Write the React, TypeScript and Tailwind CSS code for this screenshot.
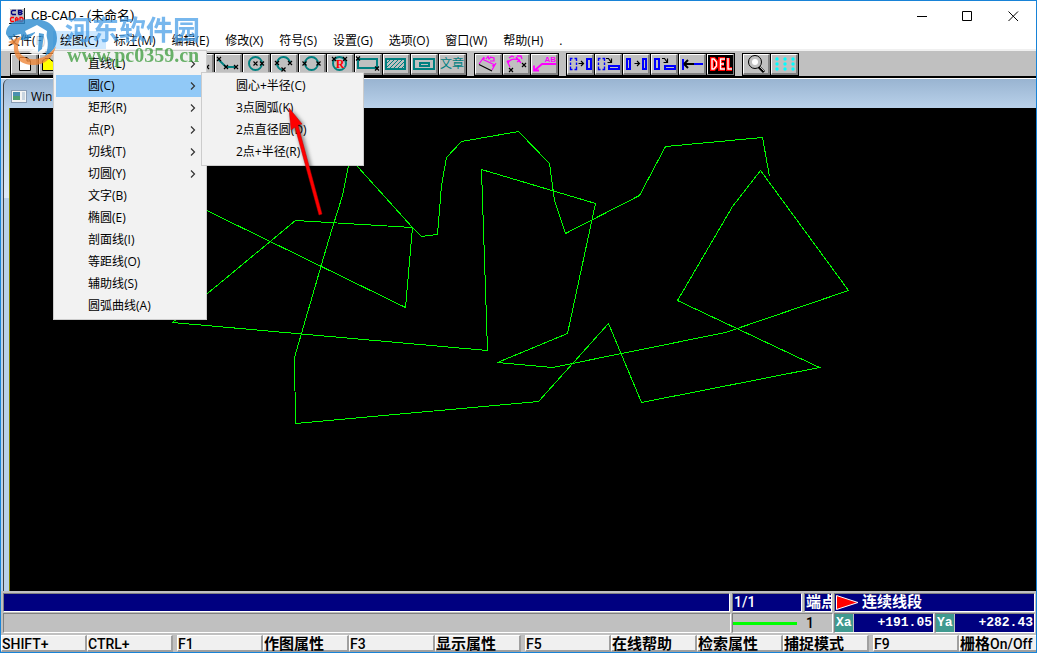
import { ReactNode, useState } from "react";
import { cx } from "class-variance-authority";

interface SubItem {
  label: string;
}

interface MenuItem {
  label: string;
  arrow?: boolean;
  children?: SubItem[];
}

const menus = [
  "文件(F)",
  "绘图(C)",
  "标注(M)",
  "编辑(E)",
  "修改(X)",
  "符号(S)",
  "设置(G)",
  "选项(O)",
  "窗口(W)",
  "帮助(H)",
  ".",
];

const drawMenu: MenuItem[] = [
  { label: "直线(L)", arrow: true },
  {
    label: "圆(C)",
    arrow: true,
    children: [
      { label: "圆心+半径(C)" },
      { label: "3点圆弧(K)" },
      { label: "2点直径圆(D)" },
      { label: "2点+半径(R)" },
    ],
  },
  { label: "矩形(R)", arrow: true },
  { label: "点(P)", arrow: true },
  { label: "切线(T)", arrow: true },
  { label: "切圆(Y)", arrow: true },
  { label: "文字(B)" },
  { label: "椭圆(E)" },
  { label: "剖面线(I)" },
  { label: "等距线(O)" },
  { label: "辅助线(S)" },
  { label: "圆弧曲线(A)" },
];

// small black cross used to mark picked points
const Cross = ({ x, y }: { x: number; y: number }) => (
  <path
    d={`M${x - 2} ${y - 2}L${x + 2} ${y + 2}M${x + 2} ${y - 2}L${x - 2} ${y + 2}`}
    stroke="#000"
    strokeWidth="1.2"
  />
);

// covers the button including its bevel
const Icon = ({ children }: { children?: ReactNode }) => (
  <svg viewBox="0 0 27 21" className="absolute -top-px -left-px h-[21px] w-[27px]" fill="none">
    {children}
  </svg>
);

const DashedBox = () => (
  <path
    d="M5.5 4.5H3.5V7M3.5 8.500V11M3.5 12.500V15.500H5.500M7.500 4.500H9.500V7M9.500 8.500V11M9.500 12.500V15.500H7.500"
    stroke="#0000ff"
    strokeWidth="1.4"
  />
);

const RightArrow = () => (
  <path d="M11.500 9.500H16M14 7L16.500 9.500L14 12" stroke="#000" strokeWidth="1.2" />
);

const DownArrow = () => (
  <path d="M11 4.500H13.500L16 8M16.500 4.500V8.500H12.500" stroke="#000" strokeWidth="1.2" />
);

const icons: Record<string, ReactNode> = {
  new: (
    <Icon>
      <path d="M8.500 3.500H16L19.500 7V16.500H8.500Z" fill="#fff" stroke="#000" />
      <path d="M16 3.500V7H19.500" stroke="#000" />
    </Icon>
  ),
  open: (
    <Icon>
      <path d="M3.500 16V7L6 4.500H11L13 7H20V16.500H3.500Z" fill="#ffff00" stroke="#000" />
    </Icon>
  ),
  save: (
    <Icon>
      <path d="M6.500 4.500H19.500V16.500H6.500Z" fill="#008080" stroke="#000" />
    </Icon>
  ),
  blank: (
    <Icon>
      <path d="M4 5L20 13" stroke="#008080" strokeWidth="2" />
      <Cross x={4} y={5} />
      <Cross x={20} y={13} />
    </Icon>
  ),
  line: (
    <Icon>
      <path d="M3 5L11 13H21" stroke="#008080" strokeWidth="2" />
      <Cross x={4} y={5} />
      <Cross x={11} y={13} />
      <Cross x={21} y={13} />
    </Icon>
  ),
  circleCenter: (
    <Icon>
      <circle cx="12.500" cy="9.500" r="6.500" stroke="#008080" strokeWidth="2" />
      <Cross x={12.5} y={9.5} />
      <Cross x={19} y={9.5} />
    </Icon>
  ),
  arc: (
    <Icon>
      <path d="M12 16A6.500 6.500 0 1 1 19 9.500" stroke="#008080" strokeWidth="2" />
      <Cross x={6} y={9} />
      <Cross x={19} y={9} />
      <Cross x={12.5} y={15.5} />
    </Icon>
  ),
  circle: (
    <Icon>
      <circle cx="12.500" cy="9.500" r="6.500" stroke="#008080" strokeWidth="2" />
      <Cross x={5.5} y={9.5} />
      <Cross x={19.5} y={9.5} />
    </Icon>
  ),
  radius: (
    <>
      <Icon>
        <circle cx="12.500" cy="9.500" r="6.500" stroke="#008080" strokeWidth="2" />
        <Cross x={7} y={5} />
        <Cross x={18} y={5} />
      </Icon>
      <span className="relative font-[Liberation_Serif,serif] text-[12px] leading-[18px] font-bold text-[#ff0000]">
        R
      </span>
    </>
  ),
  rect: (
    <Icon>
      <path d="M3 5H22V14H3Z" stroke="#008080" strokeWidth="2" />
      <Cross x={3} y={4.5} />
      <Cross x={22} y={14.5} />
    </Icon>
  ),
  hatch: (
    <Icon>
      <path d="M3 5H22V15H3Z" stroke="#008080" strokeWidth="2" />
      <path
        d="M4 9L8 5M4 13L12 5M6 15L16 5M10 15L20 5M14 15L22 7M18 15L22 11"
        stroke="#008080"
      />
    </Icon>
  ),
  doubleRect: (
    <Icon>
      <path d="M3 5H23V15H3ZM9 9H18V12H9Z" stroke="#008080" strokeWidth="2" />
    </Icon>
  ),
  text: <span className="relative text-[12px] leading-[18px] text-[#008080]">文章</span>,
  dimLine: (
    <Icon>
      <path d="M4 10.500L17 17" stroke="#000" strokeWidth="1.2" />
      <path
        d="M4 10L9 3M17 16L21 9M7 5L20 11M7 5L10 4M20 11L17 12M11 5L13 2.500L14 5L16 3M15 7L19 7L19 4L15 3"
        stroke="#ff00ff"
        strokeWidth="1.2"
      />
    </Icon>
  ),
  dimArc: (
    <Icon>
      <path
        d="M7 13L4 7M18 9L13 3M5 9C7 5 10 4 17 6M5 9L5 6M17 6L14 8M6 4L9 2L11 3M14 2H18L19 5"
        stroke="#ff00ff"
        strokeWidth="1.3"
      />
      <Cross x={8} y={16} />
      <Cross x={21} y={11} />
    </Icon>
  ),
  leader: (
    <>
      <Icon>
        <path d="M25 10H11L4 16M3 11.500V16.500H8" stroke="#ff00ff" strokeWidth="1.800" />
      </Icon>
      <span className="absolute top-0 right-0 font-[Liberation_Sans,sans-serif] text-[8px] leading-[9px] font-bold text-[#ff00ff]">
        AB
      </span>
    </>
  ),
  move: (
    <Icon>
      <DashedBox />
      <RightArrow />
      <path d="M20 5H24V15H20Z" stroke="#0000ff" strokeWidth="2" />
    </Icon>
  ),
  rotate: (
    <Icon>
      <DashedBox />
      <DownArrow />
      <path d="M14 12H24V15H14Z" stroke="#0000ff" strokeWidth="2" />
    </Icon>
  ),
  copy: (
    <Icon>
      <path d="M4 5H7V15H4ZM20 5H23V15H20Z" stroke="#0000ff" strokeWidth="2" />
      <RightArrow />
    </Icon>
  ),
  copyRotate: (
    <Icon>
      <path d="M4 5H8V15H4ZM14 12H24V15H14Z" stroke="#0000ff" strokeWidth="2" />
      <DownArrow />
    </Icon>
  ),
  extend: (
    <Icon>
      <path d="M4 5V16M4 10H24" stroke="#0000ff" strokeWidth="2" />
      <path d="M5 10H15M5 10L9 6M5 10L9 14" stroke="#000" strokeWidth="2" />
    </Icon>
  ),
  delete: (
    <Icon>
      <rect x="1" y="1" width="25" height="19" fill="#000" />
      <g stroke="#ff0000" strokeWidth="4">
        <path d="M5 5V15H7L10 12V8L7 5ZM18 5H13V15H18M13 10H17M21 4V15H25" />
      </g>
      <g stroke="#fff" strokeWidth="1.400">
        <path d="M5 5V15H7L9.500 12V8L7 5ZM18 5H13.500V15H18M13.500 10H17M21 4V15H25" />
      </g>
    </Icon>
  ),
  zoom: (
    <Icon>
      <path d="M15 12L21 18" stroke="#000" strokeWidth="3" />
      <path d="M16 12L21 17" stroke="#c0c0c0" />
      <circle cx="12" cy="8" r="6.500" fill="#c0c0c0" stroke="#000" />
      <circle cx="12" cy="8" r="3" fill="#fff" />
    </Icon>
  ),
  grid: (
    <Icon>
      <g fill="#00ffff">
        {[5, 10, 15].map((y) =>
          [6, 14, 22].map((x) => <circle key={`${x}-${y}`} cx={x} cy={y} r="1.700" />)
        )}
      </g>
    </Icon>
  ),
};

const toolGroups = [
  ["new", "open", "save"],
  [
    "blank",
    "blank",
    "blank",
    "blank",
    "line",
    "circleCenter",
    "arc",
    "circle",
    "radius",
    "rect",
    "hatch",
    "doubleRect",
    "text",
  ],
  ["dimLine", "dimArc", "leader"],
  ["move", "rotate", "copy", "copyRotate", "extend", "delete"],
  ["zoom", "grid"],
];

const keyGroups = [
  [["SHIFT+"], ["CTRL+"]],
  [["F1"], ["", "作图属性"], ["F3"], ["", "显示属性"]],
  [["F5"], ["", "在线帮助"], ["", "检索属性"], ["", "捕捉模式"]],
  [["F9"], ["On/Off", "栅格"]],
];

const AppIcon = () => (
  <svg viewBox="0 0 16 16" className="h-4 w-4" fill="none">
    <rect width="16" height="16" fill="#c0c0c0" />
    <path d="M.5 16V.5H16" stroke="#fff" />
    <path d="M15.500 0V15.500H0" stroke="#202020" />
    <path
      d="M7 2.500H3.500L2.500 3.500V5.500L3.500 6.500H7M9.500 6.500V2.500H12L13 3.500L12 4.500H9.500M12 4.500L13 5.500L12 6.500H9.500"
      stroke="#000080"
      strokeWidth="1.300"
    />
    <path
      d="M5 9.500H2.500L1.500 10.500V12.500L2.500 13.500H5M6.500 14V10.500L7.500 9.500L9 10.500V14M6.500 12H9M11 9.500V13.500H13L14 12.500V10.500L13 9.500Z"
      stroke="#ff0000"
      strokeWidth="1.300"
    />
  </svg>
);

const TitleBar = () => (
  <header className="flex h-[30px] shrink-0 items-center bg-white pl-2">
    <AppIcon />
    <h1 className="flex-1 pl-[6px] font-[Roboto,Noto_Sans_CJK_SC,sans-serif] text-[13px]">
      CB-CAD - (未命名)
    </h1>
    <button aria-label="最小化" className="flex h-7 w-[46px] items-center justify-center">
      <svg viewBox="0 0 11 11" className="h-[11px] w-[11px]" stroke="#000">
        <path d="M1 5.500H11" />
      </svg>
    </button>
    <button aria-label="最大化" className="flex h-7 w-[46px] items-center justify-center">
      <svg viewBox="0 0 11 11" className="h-[11px] w-[11px]" stroke="#000" fill="none">
        <path d="M.5 .5H9.500V9.500H.5Z" />
      </svg>
    </button>
    <button aria-label="关闭" className="flex h-7 w-[46px] items-center justify-center">
      <svg viewBox="0 0 11 11" className="h-[11px] w-[11px]" stroke="#000">
        <path d="M.5 .5L10 10M10 .5L.5 10" />
      </svg>
    </button>
  </header>
);

const DrawMenu = () => {
  const [selected, setSelected] = useState(1);

  return (
    <ul className="absolute top-[19px] left-0 z-20 w-[154px] border border-[#cccccc] bg-[#f2f2f2] p-[2px]">
      {drawMenu.map((item, i) => (
        <li key={item.label} className="relative">
          <button
            onClick={() => setSelected(i)}
            className={cx(
              "flex h-[22px] w-full items-center justify-between pr-2 pl-8 text-left",
              i === selected && "bg-[#91c9f7]"
            )}
          >
            {item.label}
            {item.arrow && (
              <svg viewBox="0 0 6 8" className="h-2 w-[6px]" fill="none" stroke="#333">
                <path d="M1 .5L4.500 4L1 7.500" strokeWidth="1.200" />
              </svg>
            )}
          </button>
          {i === selected && item.children && (
            <ul className="absolute -top-[3px] left-[145px] w-[163px] border border-[#cccccc] bg-[#f2f2f2] p-[2px]">
              {item.children.map((sub) => (
                <li key={sub.label}>
                  <button className="flex h-[22px] w-full items-center pl-8 text-left">
                    {sub.label}
                  </button>
                </li>
              ))}
            </ul>
          )}
        </li>
      ))}
    </ul>
  );
};

const MenuBar = () => (
  <nav className="flex h-5 shrink-0 items-start border-b-2 border-[#f0f0f0] bg-white">
    {menus.map((menu, i) => (
      <div key={menu} className="relative">
        <button
          className={cx(
            "h-[18px] leading-5",
            i === 0 && "w-[52px] px-[7px] text-left",
            i === 1 && "bg-[#cce8ff] px-[7px]",
            i > 1 && "px-2"
          )}
        >
          {menu}
        </button>
        {i === 1 && <DrawMenu />}
      </div>
    ))}
  </nav>
);

const Toolbar = () => (
  <div className="flex h-[28px] shrink-0 gap-[7px] overflow-hidden border-b border-white bg-[#c0c0c0] pt-[2px] pl-[9px] shadow-[inset_0_-2px_0_#000]">
    {toolGroups.map((group, g) => (
      <div key={g} className="flex h-[23px] shrink-0 gap-px bg-black p-px">
        {group.map((name, i) => (
          <button
            key={i}
            aria-label={name}
            className="relative flex h-[21px] w-[27px] items-center justify-center border-t border-r-2 border-b-2 border-l border-t-white border-r-[#808080] border-b-[#808080] border-l-white bg-[#c0c0c0]"
          >
            {icons[name]}
          </button>
        ))}
      </div>
    ))}
  </div>
);

const Drawing = () => (
  <svg
    viewBox="9.5 107.5 1026 483"
    className="block h-[483px] w-[1026px] max-w-none"
    fill="none"
    stroke="#00ff00"
    shapeRendering="crispEdges"
  >
    <polyline points="349,160 342,195 328,240 294,357 295,423 538,401 608,323 641,402 819,367 677,300 732,206 760,170 848,290 725,332 552,367 497,362 567,333 595,203 481,169 487,350 172,322 295,220 412,227 405,307 200,207" />
    <polyline points="349,160 357,166 412,227 421,236 437,234 441,185 446,157 461,141 518,131 549,163 554,200 565,233 639,195 665,146 762,137 769,176" />
  </svg>
);

const Workspace = () => (
  <main className="flex min-h-0 flex-1 flex-col bg-[#b9d1ea] pl-[2px]">
    <div className="flex h-[29px] shrink-0 items-center rounded-tl-md border-l border-[#404040] bg-linear-to-b from-[#99b4d1] to-[#b9d1ea] pt-[6px] pl-[7px]">
      <svg viewBox="0 0 16 13" className="h-[13px] w-4">
        <rect x=".5" y=".5" width="15" height="12" fill="#f4f4f4" stroke="#8a9db5" />
        <rect x="2" y="2" width="7" height="8" fill="#4a90b0" />
        <rect x="2" y="6" width="7" height="4" fill="#4fa070" />
        <rect x="11" y="2" width="3" height="8" fill="#c8d4e0" />
      </svg>
      <span className="pl-1">Win</span>
    </div>
    <div className="flex min-h-0 flex-1 border-l border-[#404040]">
      <div className="flex w-[5px] shrink-0 flex-col">
        <div className="h-[90px] bg-linear-to-b from-[#b9d1ea] to-[#dce9f7]" />
      </div>
      <div className="min-w-0 flex-1 overflow-hidden border-l border-[#808000] bg-black">
        <Drawing />
      </div>
    </div>
  </main>
);

const panel = "border border-t-[#808080] border-r-white border-b-white border-l-[#808080]";

const StatusArea = () => (
  <footer className="shrink-0 bg-[#c0c0c0] pt-[2px] font-[Roboto,Noto_Sans_CJK_SC,sans-serif] text-[15px] text-white">
    <div className="flex h-[19px] gap-[2px] pr-px pl-[2px] leading-[17px] font-bold">
      <div className={cx(panel, "flex-1 bg-[#000080]")} />
      <div className={cx(panel, "w-[70px] bg-[#000080] pl-px text-[14px] font-medium")}>1/1</div>
      <div className={cx(panel, "w-[28px] overflow-hidden bg-[#000080] pl-px whitespace-nowrap")}>
        端点
      </div>
      <div className={cx(panel, "flex w-[201px] items-center gap-[3px] bg-[#000080] pl-px")}>
        <svg viewBox="0 0 23 15" className="h-[15px] w-[23px]">
          <path d="M.5 .5L22 7.500L.5 14.500Z" fill="#ff0000" stroke="#fff" />
        </svg>
        连续线段
      </div>
    </div>
    <div className="mt-px flex h-5 gap-px pr-px pl-[2px]">
      <div className={cx(panel, "flex-1")} />
      <div className={cx(panel, "flex w-[101px] items-center")}>
        <div className="h-[3px] w-16 bg-[#00ff00]" />
        <span className="pl-[9px] text-[14px] font-medium text-black">1</span>
      </div>
      {[
        { axis: "Xa", value: "+191.05" },
        { axis: "Ya", value: "+282.43" },
      ].map(({ axis, value }) => (
        <div
          key={axis}
          className={cx(
            panel,
            "flex w-[100px] items-stretch font-[Liberation_Mono,monospace] text-[13px] leading-[18px] font-bold"
          )}
        >
          <span className="w-[18px] bg-[#409a90] pl-px">{axis}</span>
          <span className="flex-1 border-l border-[#c0c0c0] bg-[#000080] pr-px text-right">
            {value}
          </span>
        </div>
      ))}
    </div>
    <div className="mt-[2px] flex h-[17px] gap-1 overflow-hidden text-black">
      {keyGroups.map((keys, g) => (
        <div key={g} className="flex shrink-0">
          {keys.map(([latin, han]) => (
            <button
              key={latin + han}
              className="h-[17px] w-[86px] border-t border-r-2 border-b-2 border-l border-t-white border-r-[#a0a0a0] border-b-[#a0a0a0] border-l-white bg-[#f0f0f0] text-left leading-[16px] font-bold whitespace-nowrap"
            >
              {han}
              <span className="text-[14px] font-medium">{latin}</span>
            </button>
          ))}
        </div>
      ))}
    </div>
  </footer>
);

const Watermark = () => (
  <div className="pointer-events-none absolute top-[13px] left-1 z-30 flex items-center gap-[6px] select-none">
    <svg viewBox="0 0 54 52" className="h-[52px] w-[54px] opacity-80">
      <path
        d="M1 20C1 9 12 5 26 5C42 4 52 12 52 24C52 34 46 39 40 42C43 35 44 28 41 21L34 16V30H30V19L22 26H16V20C12 20 8 22 5 26Z"
        fill="#2b8bd0"
      />
      <path d="M3 28L17 22C10 32 12 42 25 45C36 46 45 41 51 32C48 45 38 52 27 51C12 50 8 40 9 31Z" fill="#f0883a" />
      <path d="M20 17L32 11L42 17L40 38C36 42 28 42 24 38L30 35V18L22 21Z" fill="#fff" />
      <path d="M34 19L39 20L37 35L33 38Z" fill="#2b8bd0" />
    </svg>
    <div className="opacity-75">
      <p className="text-[27px] leading-[30px] font-bold text-[#4a9fe8]">河东软件园</p>
      <p className="pl-[2px] font-[Liberation_Serif,serif] text-[20px] leading-5 font-bold text-[#3a9a3a]">
        www.pc0359.cn
      </p>
    </div>
  </div>
);

const Pointer = () => (
  <svg
    viewBox="0 0 44 116"
    className="pointer-events-none absolute top-[104px] left-[284px] z-30 h-[116px] w-11 drop-shadow-[2px_2px_2px_rgba(0,0,0,0.6)]"
  >
    <path d="M4 3L17 19L13 20L37 109L34 110L10 22L6 25Z" fill="#ff0000" stroke="#c00000" strokeWidth=".5" />
  </svg>
);

export default function App() {
  return (
    <div className="relative flex h-screen flex-col overflow-hidden border border-[#1883d7] bg-white font-[Open_Sans,Noto_Sans_CJK_SC,sans-serif] text-[12px] text-black">
      <TitleBar />
      <MenuBar />
      <Toolbar />
      <Workspace />
      <StatusArea />
      <Watermark />
      <Pointer />
    </div>
  );
}
